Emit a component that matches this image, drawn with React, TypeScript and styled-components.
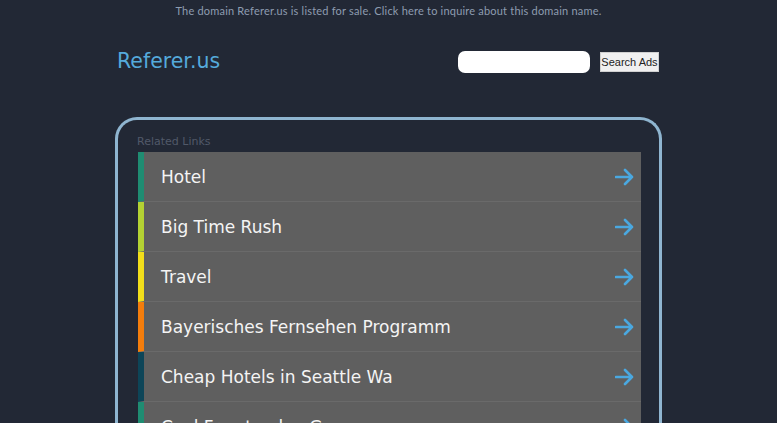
import styled, { createGlobalStyle } from "styled-components";

const GlobalStyle = createGlobalStyle`
  html, body {
    margin: 0;
    padding: 0;
    background: #222835;
    overflow: hidden;
  }
`;

const Page = styled.div`
  width: 777px;
  height: 423px;
  background: #222835;
  font-family: "DejaVu Sans", Verdana, sans-serif;
  overflow: hidden;
`;

const Notice = styled.div`
  height: 22px;
  line-height: 22px;
  text-align: center;
  font-family: Lato, "Open Sans", sans-serif;
  font-size: 11px;
  color: #8e9cb0;
  letter-spacing: 0.2px;
`;

const Container = styled.div`
  width: 547px;
  margin: 0 auto;
`;

const Header = styled.div`
  height: 80px;
  display: flex;
  align-items: center;
  justify-content: space-between;
  padding: 0 3px 0 2px;
  box-sizing: border-box;
`;

const Logo = styled.div`
  font-size: 20.5px;
  color: #55aadb;
  margin-bottom: 2px;
`;

const SearchForm = styled.div`
  display: flex;
  align-items: center;
  gap: 10px;
`;

const SearchInput = styled.input`
  width: 132px;
  height: 22px;
  box-sizing: border-box;
  border: none;
  border-radius: 7px;
  background: #fff;
  outline: none;
`;

const SearchButton = styled.button`
  width: 59px;
  height: 20px;
  padding: 0;
  border: 1px solid #d0d0d0;
  background: #f0f0f0;
  font-family: "Liberation Sans", Arial, sans-serif;
  font-size: 11px;
  color: #222;
`;

const Panel = styled.div`
  margin-top: 15px;
  border: 3px solid #8fb5d0;
  border-bottom: none;
  border-radius: 22px 22px 0 0;
  padding: 14px 18px 0 20px;
  height: 400px;
`;

const Label = styled.div`
  font-size: 11px;
  color: #515969;
  height: 18px;
  line-height: 16px;
  margin-left: -1px;
`;

const List = styled.div`
  display: flex;
  flex-direction: column;
`;

const Row = styled.div<{ $accent: string }>`
  height: 49px;
  display: flex;
  align-items: center;
  justify-content: space-between;
  background: #5f5f5f;
  border-left: 6px solid ${(p) => p.$accent};
  border-bottom: 1px solid #6a6a6a;
  padding: 0 7px 0 17px;
  color: #f4f4f4;
  font-size: 17px;
`;

const Arrow = () => (
  <svg width="19" height="18" viewBox="0 0 19 18" fill="none">
    <path
      d="M1 9 H17 M10 2 L17 9 L10 16"
      stroke="#4aa8e0"
      strokeWidth="2.6"
      strokeLinecap="round"
      strokeLinejoin="round"
    />
  </svg>
);

const links = [
  { title: "Hotel", color: "#1f8c72" },
  { title: "Big Time Rush", color: "#b4d233" },
  { title: "Travel", color: "#f2de1a" },
  { title: "Bayerisches Fernsehen Programm", color: "#f47d0c" },
  { title: "Cheap Hotels in Seattle Wa", color: "#0d4558" },
  { title: "Cool Free to play Games", color: "#1f8c72" },
];

export default function App() {
  return (
    <Page>
      <GlobalStyle />
      <Notice>
        The domain Referer.us is listed for sale. Click here to inquire about
        this domain name.
      </Notice>
      <Container>
        <Header>
          <Logo>Referer.us</Logo>
          <SearchForm>
            <SearchInput type="text" />
            <SearchButton>Search Ads</SearchButton>
          </SearchForm>
        </Header>
        <Panel>
          <Label>Related Links</Label>
          <List>
            {links.map((l) => (
              <Row key={l.title} $accent={l.color}>
                <span>{l.title}</span>
                <Arrow />
              </Row>
            ))}
          </List>
        </Panel>
      </Container>
    </Page>
  );
}
